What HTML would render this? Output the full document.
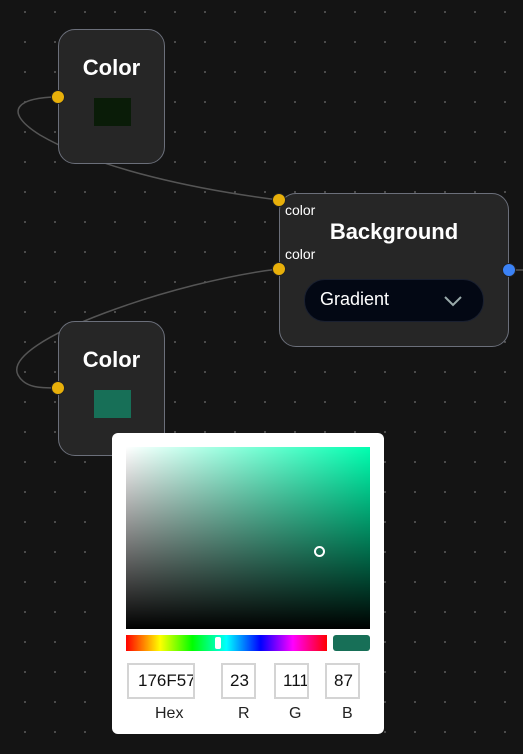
<!DOCTYPE html>
<html><head><style>
body{margin:0;width:523px;height:754px;overflow:hidden;background:#141414;font-family:"Segoe UI","Liberation Sans",sans-serif;position:relative;
background-image:radial-gradient(circle,#5a5a5a 0.8px,transparent 1.1px);background-size:30px 30px;background-position:10px -3px;}
.node{position:absolute;background:#262626;border:1.5px solid #6b6f7a;border-radius:17px;box-sizing:border-box;color:#fff}
.t{position:absolute;left:0;right:0;text-align:center;font-weight:600;font-size:22px}
.port{position:absolute;width:14px;height:14px;border-radius:50%;background:#e8b00a;border:1px solid #222;box-sizing:border-box}
.in{position:absolute;border:2px solid #d4d4d4;box-sizing:border-box;height:36px;font-size:17px;color:#111;line-height:32px;padding-left:7px;overflow:hidden;white-space:nowrap}
.lb{position:absolute;top:705px;font-size:16px;color:#222}
</style></head><body>
<svg width="523" height="754" style="position:absolute;left:0;top:0">
<path d="M58 97 C20 97 0 110 40 135 C100 170 200 190 279 200" stroke="#555" stroke-width="1.5" fill="none"/>
<path d="M279 269 C180 280 0 340 18 375 C25 388 40 388 58 388" stroke="#555" stroke-width="1.5" fill="none"/>
<path d="M509 270 L523 270" stroke="#555" stroke-width="1.5"/>
</svg>
<div class="node" style="left:58px;top:29px;width:107px;height:135px"><div class="t" style="top:25px">Color</div>
<div style="position:absolute;left:35px;top:68px;width:37px;height:28px;background:#0a1c08"></div></div>
<div class="port" style="left:51px;top:90px"></div>
<div class="node" style="left:279px;top:193px;width:230px;height:154px">
<div style="position:absolute;left:5px;top:8px;font-size:14px">color</div>
<div style="position:absolute;left:5px;top:52px;font-size:14px">color</div>
<div class="t" style="top:25px">Background</div>
<div style="position:absolute;left:24px;top:85px;width:180px;height:43px;background:#030814;border-radius:21px;border:1px solid #1a2030;box-sizing:border-box">
<span style="position:absolute;left:15px;top:9px;font-size:18px">Gradient</span>
<svg style="position:absolute;left:138px;top:14px" width="20" height="14"><path d="M2 3 L10 11 L18 3" stroke="#9aa" stroke-width="2" fill="none"/></svg></div></div>
<div class="port" style="left:272px;top:193px"></div>
<div class="port" style="left:272px;top:262px"></div>
<div class="port" style="left:502px;top:263px;background:#3b82f6"></div>
<div class="node" style="left:58px;top:321px;width:107px;height:135px"><div class="t" style="top:25px">Color</div>
<div style="position:absolute;left:35px;top:68px;width:37px;height:28px;background:#176F57"></div></div>
<div class="port" style="left:51px;top:381px"></div>
<div style="position:absolute;left:112px;top:433px;width:272px;height:301px;background:#fff;border-radius:6px">
<div style="position:absolute;left:14px;top:14px;width:244px;height:182px;background:linear-gradient(to top,#000,rgba(0,0,0,0)),linear-gradient(to right,#fff,#00ffb0)"></div>
<div style="position:absolute;left:202px;top:113px;width:7px;height:7px;border:2px solid #fff;border-radius:50%"></div>
<div style="position:absolute;left:14px;top:202px;width:201px;height:16px;background:linear-gradient(to right,#f00,#ff0 17%,#0f0 33%,#0ff 50%,#00f 67%,#f0f 83%,#f00)"></div>
<div style="position:absolute;left:103px;top:204px;width:6px;height:12px;background:#fff;border-radius:2px"></div>
<div style="position:absolute;left:221px;top:202px;width:37px;height:16px;background:#176F57;border-radius:3px"></div>
</div>
<div class="in" style="left:127px;top:663px;width:68px;padding-left:9px">176F57</div>
<div class="in" style="left:221px;top:663px;width:35px">23</div>
<div class="in" style="left:274px;top:663px;width:35px">111</div>
<div class="in" style="left:325px;top:663px;width:35px">87</div>
<div class="lb" style="left:155px">Hex</div>
<div class="lb" style="left:238px">R</div>
<div class="lb" style="left:289px">G</div>
<div class="lb" style="left:342px">B</div>
</body></html>
